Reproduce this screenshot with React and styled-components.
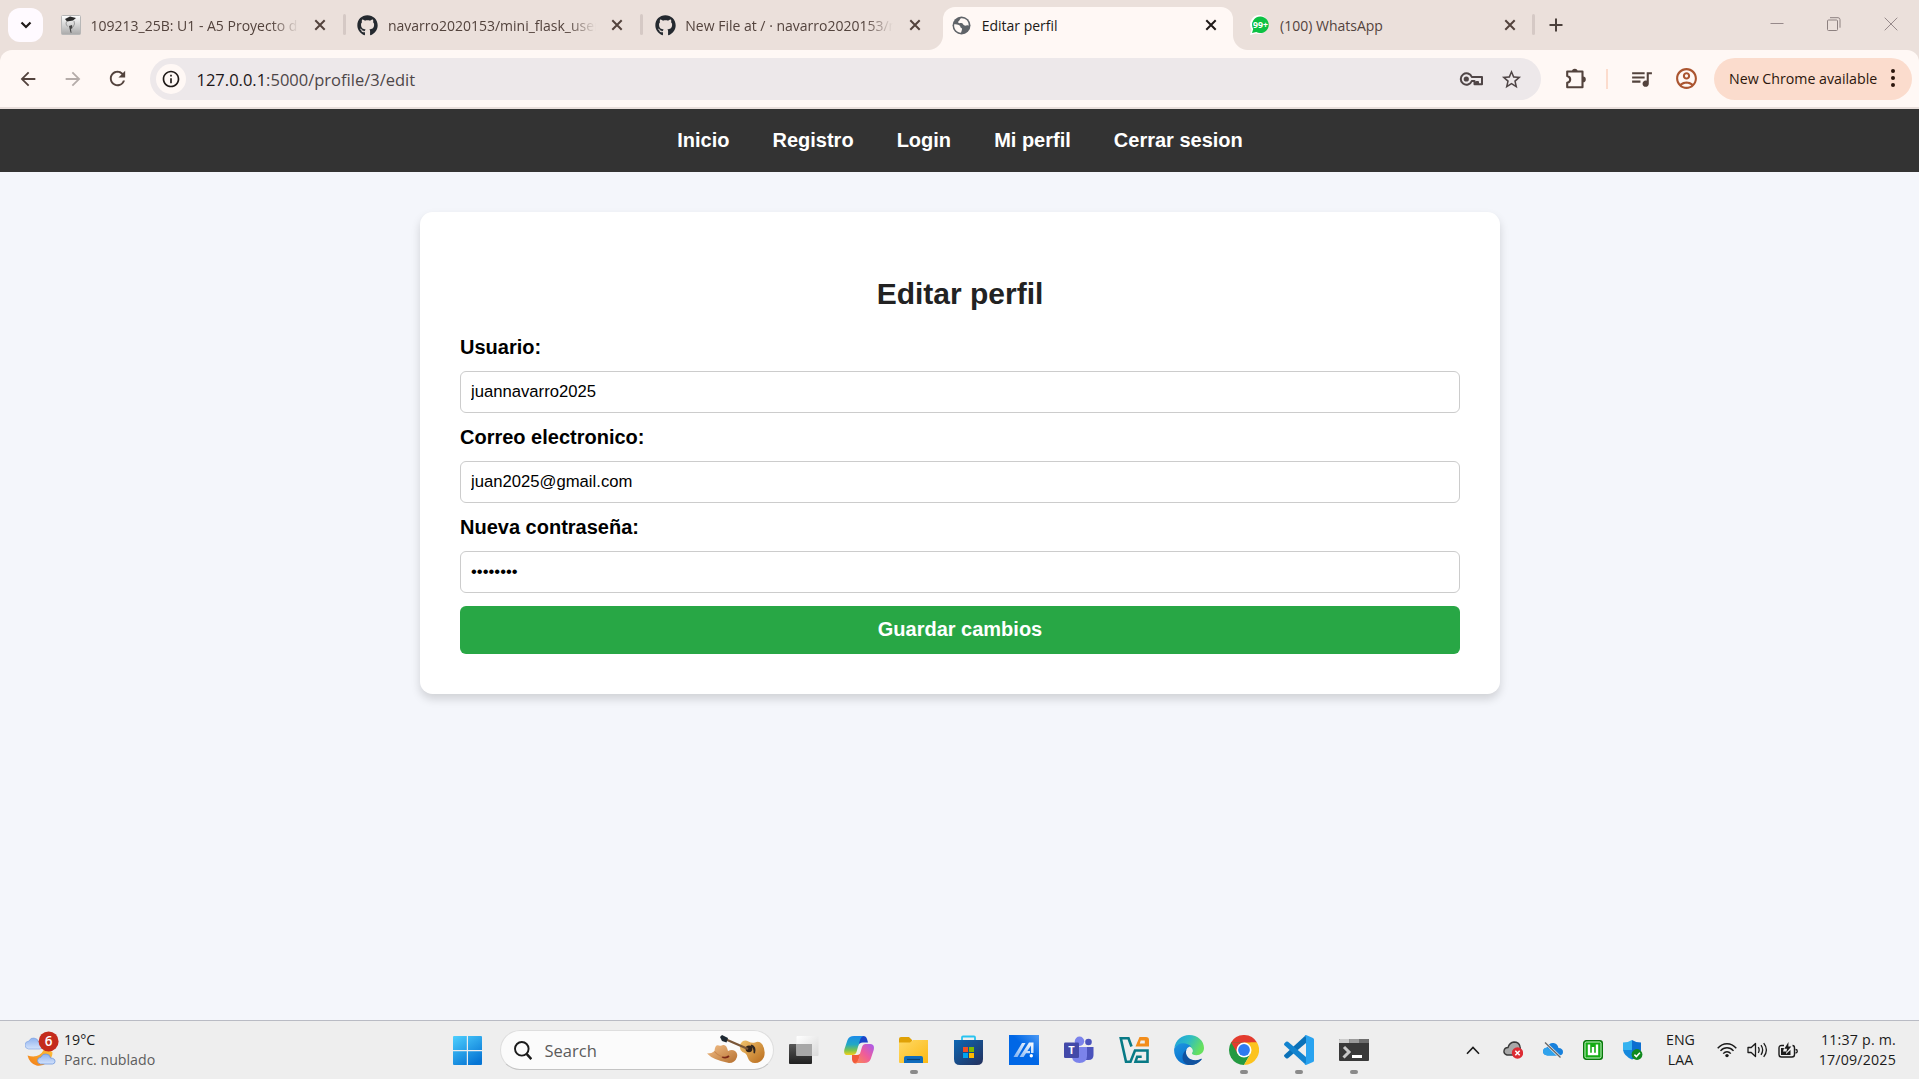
import React from "react";
import styled, { createGlobalStyle, css } from "styled-components";
import { FaGithub } from "react-icons/fa";
import {
  MdArrowBack,
  MdArrowForward,
  MdRefresh,
  MdInfoOutline,
  MdStarOutline,
  MdQueueMusic,
  MdOutlineAccountCircle,
} from "react-icons/md";

const UI_FONT = '"Open Sans", "Noto Sans", sans-serif';

const GlobalStyle = createGlobalStyle`
  * { box-sizing: border-box; }
  html, body { margin: 0; padding: 0; overflow: hidden; }
  body { font-family: "Liberation Sans", Arial, sans-serif; }
  svg { display: block; flex: none; }
`;

const Screen = styled.div`
  display: flex;
  flex-direction: column;
  width: 1919px;
  height: 1079px;
  background: #f4f6fb;
`;

/* ---------- Browser chrome ---------- */

const TabStrip = styled.div`
  display: flex;
  height: 50px;
  padding-left: 8px;
  background: #ebe0db;
  font-family: ${UI_FONT};
`;

const TabSearch = styled.div`
  display: flex;
  align-items: center;
  justify-content: center;
  width: 35px;
  height: 34px;
  margin: 8px 4px 0 0;
  border-radius: 12px;
  background: #fffaff;
`;

const Tab = styled.div`
  position: relative;
  display: flex;
  align-items: center;
  width: 297.4px;
  height: 50px;
  padding: 0 0 0 13.5px;
  color: ${(p) => (p.$active ? "#201a18" : "#53433d")};
  ${(p) =>
    p.$active &&
    css`
      width: 289.4px;
      height: 43px;
      margin: 7px 4px 0;
      padding: 0 0 7px 8.500px;
      border-radius: 12px 12px 0 0;
      background: #fff8f5;
      &::before,
      &::after {
        content: "";
        position: absolute;
        bottom: 0;
        width: 15px;
        height: 15px;
      }
      &::before {
        left: -15px;
        background: radial-gradient(circle at 0 0, transparent 14.5px, #fff8f5 15.5px);
      }
      &::after {
        right: -15px;
        background: radial-gradient(circle at 100% 0, transparent 14.5px, #fff8f5 15.5px);
      }
    `}
`;

const Favicon = styled.span`
  display: flex;
  align-items: center;
  justify-content: center;
  width: 20px;
  height: 20px;
`;

const TabTitle = styled.span`
  width: 209px;
  margin: 1px 0 0 10px;
  overflow: hidden;
  white-space: nowrap;
  font-size: 14px;
  line-height: 20px;
  ${(p) =>
    p.$fade && css`mask-image: linear-gradient(90deg, #000 180px, transparent 208px);`}
`;

const TabClose = styled.span`
  display: flex;
  justify-content: center;
  width: 20px;
  margin-left: 10.5px;
`;

const TabSeparator = styled.span`
  width: 3px;
  height: 21px;
  margin: 0 -1.5px 2px auto;
  border-radius: 2px;
  background: #d5c9c5;
`;

const NewTab = styled.span`
  display: flex;
  align-items: center;
  margin-left: 15px;
`;

const WindowButtons = styled.div`
  display: flex;
  align-items: center;
  gap: 43px;
  height: 48px;
  margin: 0 21px 0 auto;
`;

const ToolbarBack = styled.div`
  background: #ebe0db;
  font-family: ${UI_FONT};
`;

const Toolbar = styled.div`
  display: flex;
  align-items: center;
  height: 57px;
  padding: 0 7px 0 5px;
  border-radius: 12px 12px 0 0;
  background: #fff8f5;
`;

const ToolButton = styled.span`
  display: flex;
  align-items: center;
  justify-content: center;
  width: ${(p) => p.$w || 45}px;
  color: ${(p) => p.$color || "#53433d"};
`;

const Omnibox = styled.div`
  display: flex;
  align-items: center;
  width: 1391px;
  height: 42px;
  margin: 1px 0 0 10px;
  padding: 0 10px 0 6px;
  border-radius: 21px;
  background: #ede8ea;
`;

const SiteInfo = styled.span`
  display: flex;
  align-items: center;
  justify-content: center;
  width: 30px;
  height: 30px;
  border-radius: 50%;
  background: #fff8f5;
  color: #201a18;
`;

const Url = styled.span`
  margin: 1px auto 0 10.5px;
  color: #4d4648;
  font-size: 16.5px;
  line-height: 24px;
  b {
    color: #1c1618;
    font-weight: 400;
  }
`;

const ToolDivider = styled.span`
  width: 2px;
  height: 20px;
  margin: 0 9px 0 -4px;
  background: #fcdccd;
`;

const UpdatePill = styled.div`
  display: flex;
  align-items: center;
  justify-content: space-between;
  width: 198px;
  height: 42px;
  margin-left: auto;
  padding: 0 17px 1px 15px;
  border-radius: 21px;
  background: #fbdccd;
  color: #2b160c;
  font-size: 14.2px;
  white-space: nowrap;
`;

const ChromeEdge = styled.div`
  height: 2px;
  background: #e9dfdc;
`;

/* ---------- Page ---------- */

const Nav = styled.nav`
  display: flex;
  justify-content: center;
  gap: 43.06px;
  height: 63px;
  padding: 20px 0 0 1px;
  background: #333;
`;

const NavLink = styled.a`
  color: #fff;
  font-size: 20px;
  font-weight: 700;
  line-height: 23px;
`;

const Page = styled.main`
  flex: 1;
  padding: 40px 0 0 1px;
`;

const Card = styled.form`
  display: flex;
  flex-direction: column;
  width: 1080px;
  height: 482px;
  margin: 0 auto;
  padding: 65px 40px 40px;
  border-radius: 12.5px;
  background: #fff;
  box-shadow: 0 5px 10px rgba(0, 0, 0, 0.15);
`;

const Title = styled.h2`
  margin: 0 0 12px;
  color: #222;
  font-size: 30px;
  line-height: 34px;
  text-align: center;
`;

const Label = styled.label`
  margin: 13px 0 12px;
  color: #000;
  font-size: 20px;
  font-weight: 700;
  line-height: 23px;
`;

const Input = styled.input`
  width: 100%;
  height: 42px;
  padding: 0 10px;
  border: 1px solid #ccc;
  border-radius: 6px;
  outline: none;
  background: #fff;
  color: #000;
  font: 16.667px "Liberation Sans", Arial, sans-serif;
`;

const Submit = styled.button`
  width: 100%;
  height: 48px;
  margin-top: 13px;
  padding: 0 0 2px;
  border: 0;
  border-radius: 6px;
  background: #28a745;
  color: #fff;
  font: 700 20px "Liberation Sans", Arial, sans-serif;
`;

/* ---------- Taskbar ---------- */

const Taskbar = styled.footer`
  display: flex;
  align-items: center;
  height: 59px;
  padding: 0 23px 0 25px;
  border-top: 1px solid #b9bbc4;
  background: #eee;
  color: #1b1b1b;
  font-family: ${UI_FONT};
  font-size: 14.2px;
`;

const Weather = styled.div`
  display: flex;
  align-items: center;
  gap: 5px;
  width: 428px;
`;

const Lines = styled.div`
  display: flex;
  flex-direction: column;
  line-height: 20px;
  text-align: ${(p) => p.$align || "left"};
  white-space: nowrap;
  letter-spacing: ${(p) => p.$spacing || 0}px;
`;

const Muted = styled.span`
  color: #5d5d5d;
`;

const SearchBox = styled.div`
  display: flex;
  align-items: center;
  width: 274px;
  height: 40px;
  margin: 0 15px 0 17px;
  padding: 0 7px 0 13px;
  border: 1px solid #dedede;
  border-bottom-color: #c4c4c4;
  border-radius: 20px;
  background: #fbfbfb;
  color: #5c5c5c;
  font-size: 16.5px;
`;

const SearchText = styled.span`
  margin: 0 auto 0 12.5px;
`;

const Apps = styled.div`
  display: flex;
  gap: 25px;
`;

const App30 = styled.span`
  position: relative;
  width: 30px;
  height: 30px;
  ${(p) =>
    p.$running &&
    css`
      &::after {
        content: "";
        position: absolute;
        left: 11px;
        top: 35px;
        width: 8px;
        height: 4px;
        border-radius: 2px;
        background: #8a8a8a;
      }
    `}
`;

const Tray = styled.div`
  display: flex;
  align-items: center;
  margin-left: auto;
`;

const TrayIcon = styled.span`
  display: flex;
  justify-content: center;
  width: ${(p) => p.$w}px;
`;

const Clock = styled.div`
  width: 91px;
`;

/* ---------- Drawings ---------- */

const Cross = ({ color = "#53433d" }) => (
  <svg width="12" height="12" viewBox="0 0 12 12" stroke={color} strokeWidth="2">
    <path d="M1.3 1.3 10.7 10.7M10.7 1.3 1.3 10.7" />
  </svg>
);

const CourseIcon = () => (
  <svg width="20" height="20" viewBox="0 0 20 20">
    <defs>
      <linearGradient id="course" x1="0" y1="0" x2="0" y2="1">
        <stop offset="0" stopColor="#fff" />
        <stop offset="1" stopColor="#a9a9a9" />
      </linearGradient>
    </defs>
    <rect x=".5" y=".5" width="19" height="19" rx="1" fill="url(#course)" stroke="#b7b7b7" />
    <path d="M4 4 9 1.500l6 1.500-3 2.500-6 1z" fill="#2a2a2a" />
    <path d="M5.500 6.500Q4 9 6.500 11.500M13 6q1.500 3-1 6" fill="none" stroke="#9a9a9a" />
    <path d="m8 11 3-1 .5 3-1.500 1 .5 4-1-.5z" fill="#444" />
  </svg>
);

const Globe = () => (
  <svg width="19" height="19" viewBox="0 0 19 19">
    <circle cx="9.500" cy="9.500" r="9" fill="#5f6368" />
    <path
      d="M2.200 8.300c2 .2 3.500 0 5 1 1.800 1.100.5 2.200 2.200 2.600 1.200.4.500 2.200-.4 4.800C5 16.500 1.500 13 2.200 8.300zM8.800 2.200C7.200 4 7.700 4.800 6.200 5.500c-.6 2 1.600 1.700 2.800 1.500 2.200-.2 2 2.200 3.600 2.600 1.600.2 2.200-.8 4 .2C17.300 4.700 13 1.600 8.800 2.200z"
      fill="#fff8f5"
    />
  </svg>
);

const WhatsAppText = styled.text`
  font: 700 9px "Open Sans", "Noto Sans", sans-serif;
  fill: #fff;
`;

const WhatsApp = () => (
  <svg width="20" height="20" viewBox="0 0 20 20">
    <path d="M10.500 0A9.500 9.500 0 1 1 6 18.600L0 20l1.600-5.500A9.500 9.500 0 0 1 10.500 0z" fill="#fff" />
    <path d="M10.500 1.500a8.300 8.300 0 1 1-4.200 15.500L2 18l1.200-4.100A8.300 8.300 0 0 1 10.500 1.500z" fill="#0cc143" />
    <WhatsAppText x="3" y="13" textLength="15" lengthAdjust="spacingAndGlyphs">
      99+
    </WhatsAppText>
  </svg>
);

const KeyIcon = () => (
  <svg width="24" height="18" viewBox="0 0 24 18" fill="none" stroke="#4f4546" strokeWidth="2">
    <path d="M12.800 7A5.700 5.700 0 1 0 12.800 11H15.500v3.300h2V12h1.500v2.300H23V7z" strokeLinejoin="round" />
    <circle cx="7.300" cy="9" r="2.600" fill="#4f4546" stroke="none" />
  </svg>
);

const PuzzleIcon = () => (
  <svg width="22" height="22" viewBox="0 0 22 22">
    <path
      d="M2.200 3.500h15.300v15.800H2.200v-4.500q3-.8 3-3.400t-3-3.400z"
      fill="none"
      stroke="#53433d"
      strokeWidth="2.100"
      strokeLinejoin="round"
    />
    <path d="M7 3.500a2.800 2.800 0 0 1 5.600 0zM18 8.600a2.800 2.800 0 0 1 0 5.600z" fill="#53433d" />
  </svg>
);

const BadgeText = styled.text`
  font: 600 13.5px "Open Sans", "Noto Sans", sans-serif;
  fill: #fff;
`;

const WeatherIcon = () => (
  <svg width="34" height="38" viewBox="0 0 34 38">
    <defs>
      <linearGradient id="cloud" x1="0" y1="0" x2="0" y2="1">
        <stop offset="0" stopColor="#8fb2ee" />
        <stop offset="1" stopColor="#d3e2fb" />
      </linearGradient>
      <linearGradient id="moon" x1="1" y1="0" x2="0" y2="1">
        <stop offset="0" stopColor="#ffc23a" />
        <stop offset="1" stopColor="#f17a16" />
      </linearGradient>
    </defs>
    <path d="M3.500 18q-3.500-.5-3.500-4t4-4Q5.500 6.500 9 7q4 .5 4.500 4 4 .5 4 4 0 2.500-2.500 3z" fill="url(#cloud)" stroke="#7ba0e0" strokeWidth=".6" />
    <path d="M2.500 24.500Q14 28 19 18.500q7 .5 8.500 3 0 5-5 10-5 4-11 3-7-2-9-10z" fill="url(#moon)" />
    <path d="M15.500 33q-3-.5-3-3.500t3.500-3.300q1.500-3.700 5-3.200 4 .3 4.500 4 4.500.2 4.500 3.500 0 2.200-2.500 2.500z" fill="url(#cloud)" stroke="#6f97dd" strokeWidth=".8" />
    <circle cx="23.600" cy="10.400" r="10" fill="#c42b1c" />
    <BadgeText x="23.600" y="15.400" textAnchor="middle">
      6
    </BadgeText>
  </svg>
);

const WindowsLogo = () => (
  <svg width="30" height="30" viewBox="0 0 30 30">
    <defs>
      <linearGradient id="win" gradientUnits="userSpaceOnUse" x1="2" y1="0" x2="20" y2="29">
        <stop offset="0" stopColor="#4ccdfd" />
        <stop offset="1" stopColor="#0675d4" />
      </linearGradient>
    </defs>
    <g transform="translate(0 1)">
      <path d="M0 1q0-1 1-1h12.800v14H0zM15 0h13q1 0 1 1v13H15zM0 15.200h13.800v13.800H1q-1 0-1-1zM15 15.200h14V28q0 1-1 1H15z" fill="url(#win)" />
    </g>
  </svg>
);

const Guitar = () => (
  <svg width="60" height="30" viewBox="0 0 60 30">
    <defs>
      <linearGradient id="guitar" x1="0" y1="0" x2="1" y2="1">
        <stop offset="0" stopColor="#f1c36c" />
        <stop offset="1" stopColor="#b86b1d" />
      </linearGradient>
      <linearGradient id="hat" x1="0" y1="0" x2="1" y2="1">
        <stop offset="0" stopColor="#f4c08a" />
        <stop offset="1" stopColor="#b5702f" />
      </linearGradient>
    </defs>
    <path d="M35 8q3-4 7.500-1.500Q46 8.500 49 7.500q4-2 7 1.500 4 6 2 13-3 6-9 6-5.500 0-7.500-6-1-4-5-5-4.500-3.500-1.500-9z" fill="url(#guitar)" />
    <circle cx="43" cy="13.800" r="3.400" fill="#30231a" />
    <path d="m45.500 9.500q5.500 2 3.500 9l-1.500-.5q.5-5-3-7z" fill="#2d2623" />
    <path d="m19 4 23 10" stroke="#795638" strokeWidth="2.400" />
    <path d="m14 2 2-2 6 3-1.500 4.500L16 6z" fill="#1d2832" />
    <path d="M1 18.500q5 0 7.500-2.500Q9 9 13 10.500q2 .8 4-.5 3.500-1 5 6 4-2 7 0 3 2.500 2 6-2 6-8 6Q7 25 1 18.500z" fill="url(#hat)" />
    <path d="M16 22q4.500 1.500 7-1" fill="none" stroke="#7b2817" strokeWidth="1.800" />
    <path d="M8.500 16.500q3 4 8 5.500" fill="none" stroke="#c98850" strokeWidth="1.200" />
  </svg>
);

const TaskView = () => (
  <svg width="30" height="30" viewBox="0 0 30 30">
    <defs>
      <linearGradient id="tv" x1="0" y1="0" x2="0" y2="1">
        <stop offset="0" stopColor="#575757" />
        <stop offset="1" stopColor="#202020" />
      </linearGradient>
      <linearGradient id="tvw" x1="0" y1="0" x2="1" y2="1">
        <stop offset="0" stopColor="#fff" />
        <stop offset="1" stopColor="#d9d9d9" />
      </linearGradient>
    </defs>
    <rect x="0" y="9" width="23" height="20" rx="1" fill="url(#tv)" />
    <rect x="7.500" y="1" width="22" height="20" rx="1" fill="url(#tvw)" />
    <path d="M7.500 9H23v12H7.500z" fill="#a8a8a8" />
  </svg>
);

const Copilot = () => (
  <svg width="30" height="30" viewBox="0 0 30 30">
    <defs>
      <linearGradient id="cp1" x1="0" y1="0" x2="0" y2="1">
        <stop offset="0" stopColor="#1a8bea" />
        <stop offset=".45" stopColor="#22a8c4" />
        <stop offset=".75" stopColor="#7cc34c" />
        <stop offset="1" stopColor="#f5cf19" />
      </linearGradient>
      <linearGradient id="cp2" x1="1" y1="0" x2="0" y2="1">
        <stop offset="0" stopColor="#a55bf0" />
        <stop offset=".5" stopColor="#ef5c9b" />
        <stop offset="1" stopColor="#fb8b4e" />
      </linearGradient>
    </defs>
    <path d="M16 1h3.500Q22 1 23 4l1 3.500h-5Q15 7.500 14 11z" fill="#1a45c9" />
    <path d="M10 1h10q-3 .5-4 4l-3.500 12q-1 3-4 3H3.500Q-1 20 .5 14L3.500 5Q5 1 10 1z" fill="url(#cp1)" />
    <path d="M8 20h5q3 0 4-3l-3 10q-1 1.500-3 1.500-2.500-.5-3-4z" fill="#f25a3a" />
    <path d="M21.500 9h4.500q5 0 3.700 6l-3 9q-1.500 4-6.200 4H11q2.500-.5 3.500-4L18 12q1-3 3.500-3z" fill="url(#cp2)" />
  </svg>
);

const Folder = () => (
  <svg width="30" height="30" viewBox="0 0 30 30">
    <defs>
      <linearGradient id="fold" x1="0" y1="0" x2="1" y2="1">
        <stop offset="0" stopColor="#ffd965" />
        <stop offset="1" stopColor="#fbb914" />
      </linearGradient>
    </defs>
    <path d="M0 4q0-2 2-2h8l3 3v7H0z" fill="#e0a106" />
    <path d="M0 7.500h11L14 5h15v23H1q-1 0-1-1z" fill="url(#fold)" />
    <path d="M5 28v-5q0-2 2-2h15q2 0 2 2v5z" fill="#0f6cbd" />
    <path d="M8 24.500h13" stroke="#0a4173" strokeWidth="1.200" />
  </svg>
);

const Store = () => (
  <svg width="30" height="30" viewBox="0 0 30 30">
    <defs>
      <linearGradient id="store" x1="0" y1="0" x2="1" y2="1">
        <stop offset="0" stopColor="#0d67b4" />
        <stop offset="1" stopColor="#24305c" />
      </linearGradient>
    </defs>
    <path d="M8 6V2.500q0-1 1-1h11q1 0 1 1V6" fill="none" stroke="#27c3f0" strokeWidth="1.800" />
    <path d="M0 5h29v19q0 6-6 6H6q-6 0-6-6z" fill="url(#store)" />
    <path d="M9 12h5v5H9z" fill="#f25022" />
    <path d="M15 12h5v5h-5z" fill="#7fba00" />
    <path d="M9 18h5v5H9z" fill="#00a4ef" />
    <path d="M15 18h5v5h-5z" fill="#ffb900" />
  </svg>
);

const MyAsus = () => (
  <svg width="30" height="30" viewBox="0 0 30 30">
    <defs>
      <linearGradient id="asus" x1="0" y1="1" x2="1" y2="0">
        <stop offset=".55" stopColor="#0067e6" />
        <stop offset="1" stopColor="#4d9af4" />
      </linearGradient>
      <linearGradient id="slash" x1="0" y1="1" x2="1" y2="0">
        <stop offset="0" stopColor="#7db1f3" />
        <stop offset="1" stopColor="#fff" />
      </linearGradient>
    </defs>
    <path d="M0 0h30v30H0z" fill="url(#asus)" />
    <path d="M4.500 22H8.500L16.500 8H13zM10.500 22H14.500L17 18.300h4V16h-2.600L22 10.500V18h2.500V7.500H20z" fill="url(#slash)" />
    <circle cx="22.300" cy="20.700" r="1.700" fill="#fff" />
  </svg>
);

const TeamsText = styled.text`
  font: 700 11px "Open Sans", "Noto Sans", sans-serif;
  fill: #fff;
`;

const Teams = () => (
  <svg width="30" height="30" viewBox="0 0 30 30">
    <circle cx="24.500" cy="7" r="3.300" fill="#4b53bc" />
    <path d="M20 12h9.500v8q0 5-5 5H20z" fill="#4b53bc" />
    <circle cx="15.500" cy="6.300" r="4.700" fill="#7b83eb" />
    <path d="M8 12h15v9q0 7-7.500 7T8 21z" fill="#7b83eb" />
    <rect x="0" y="7.500" width="15" height="15.500" rx="1.300" fill="#4349a9" />
    <TeamsText x="7.500" y="19.200" textAnchor="middle">
      T
    </TeamsText>
  </svg>
);

const VirtualBox = () => (
  <svg width="30" height="30" viewBox="0 0 30 30">
    <path d="M12.500 11.500 9.500 3.300H1.800L7 26.700h4.500L16 15.500h12.500v11.200H16.500l1.700-5h4.500" fill="none" stroke="#087a86" strokeWidth="2.600" />
    <path d="M20.500 2H27q3 0 3 3v6.500H16.500zM21.700 5.500 20.800 8.500h5V5.500z" fill="#f28d1b" fillRule="evenodd" />
  </svg>
);

const Edge = () => (
  <svg width="30" height="30" viewBox="0 0 30 30">
    <defs>
      <linearGradient id="edge1" x1="0" y1="0" x2="1" y2=".4">
        <stop offset="0" stopColor="#1d9ede" />
        <stop offset=".5" stopColor="#2dbbc6" />
        <stop offset="1" stopColor="#67e05e" />
      </linearGradient>
      <linearGradient id="edge2" x1="0" y1="0" x2=".6" y2="1">
        <stop offset="0" stopColor="#1e96e0" />
        <stop offset="1" stopColor="#0669c9" />
      </linearGradient>
    </defs>
    <path d="M.3 13C1.500 5 8 0 15 0c9 0 15 6 15 13 0 4.500-3.500 7.200-7.500 7.200-3.200 0-5-1.200-4.500-2.200 1.500-1.500 1-4-1-5.500C13 9 6 7.500.3 13z" fill="url(#edge1)" />
    <path d="M.2 13.500C4 6.500 13 7 17.500 11.500c-3-.5-5.500 2-5.500 5.500 0 6 6 9.500 11 8.500 2-.3 3.500-1 4.500-1.500C25 28 20 30 15 30 6 30-.8 22.500.2 13.500z" fill="url(#edge2)" />
    <path d="M12.500 14.500c-2.500 6 2.500 11 9 10.800 2.500 0 4.500-1 5.500-1.500 1-.3 1 .5.5 1C24 29 19 30.500 14.500 30 8 28 6 20 12.500 14.500z" fill="#10529f" />
  </svg>
);

const Chrome = () => (
  <svg width="30" height="30" viewBox="0 0 30 30">
    <path d="M15 15 2.010 7.500A15 15 0 0 1 28 7.500z" fill="#e33b2e" />
    <path d="M2.010 7.500A15 15 0 0 0 15 30l6.500-11.200L15 15z" fill="#249a41" />
    <path d="M28 7.500A15 15 0 0 1 15 30l6.500-11.200V7.500z" fill="#fcc31e" />
    <path d="M2.010 7.500 8.500 18.700 15 22.500l6.500-3.700L15 15V7.500z" fill="#249a41" />
    <path d="M2.010 7.500 8.500 18.700 15 7.500z" fill="#e33b2e" />
    <path d="M15 7.500h13L21.500 18.800z" fill="#fcc31e" />
    <path d="M2.010 7.500 8.500 18.700l-3 2z" fill="#249a41" />
    <circle cx="15" cy="15" r="7.500" fill="#fff" />
    <circle cx="15" cy="15" r="5.900" fill="#2f7bf0" />
  </svg>
);

const VSCode = () => (
  <svg width="30" height="30" viewBox="0 0 30 30">
    <path d="M22 0v8L4 23.200q-1 .8-2 0l-1.500-1.500q-1-1 0-2z" fill="#0a71b8" />
    <path d="M22 30v-8L4 6.800q-1-.8-2 0L.5 8.300q-1 1 0 2z" fill="#1283cf" />
    <path d="M22 0 29 3q1 .5 1 1.500v21q0 1-1 1.500l-7 3q-.8 0-1.500-1 1.500 0 1.500-2V3q0-2-1.500-2z" fill="#29a3f0" />
  </svg>
);

const Terminal = () => (
  <svg width="30" height="30" viewBox="0 0 30 30">
    <path d="M0 9V5q0-1 1-1h28q1 0 1 1v20q0 1-1 1H1q-1 0-1-1z" fill="#393939" />
    <path d="M1 4h9.500v4H0V5q0-1 1-1z" fill="#ccc" />
    <path d="M10.500 4H20v4h-9.500z" fill="#9a9a9a" />
    <path d="M20 4h9q1 0 1 1v3H20z" fill="#6d6d6d" />
    <path d="m5 12 5 5-5.500 5.500" fill="none" stroke="#c9c9c9" strokeWidth="3" />
    <path d="M13 20h10v3H13z" fill="#fff" />
  </svg>
);

const CloudError = () => (
  <svg width="20" height="18" viewBox="0 0 20 18">
    <path d="M4 14q-3.500-1-3-4.200T5 6.500Q6.500 1.500 11 1q5 0 6 4.500 1 4-1 8.500z" fill="#a8a8a8" stroke="#3a3a3a" strokeWidth="1.400" />
    <circle cx="14.500" cy="12" r="5.700" fill="#dd2b33" />
    <path d="m12.300 9.800 4.400 4.400m0-4.400-4.400 4.400" stroke="#fff" strokeWidth="1.500" />
  </svg>
);

const OneDrive = () => (
  <svg width="20" height="18" viewBox="0 0 20 18">
    <path d="M4.500 14.500Q0 14 0 10.500t4-4Q6 1.500 10.500 2q4 .3 5 5 4.500.3 4.500 4 0 3.300-4 3.500z" fill="#1780dc" />
    <path d="M4.500 14.500Q0 14 0 10.500t4-4l13 8z" fill="#30a3ec" />
    <path d="m2 1.500 15.500 15" stroke="#eee" strokeWidth="2.600" />
    <path d="m2 1.500 15.500 15" stroke="#666" strokeWidth="1.300" />
  </svg>
);

const GreenU = () => (
  <svg width="20" height="20" viewBox="0 0 20 20">
    <rect x=".7" y=".7" width="18.600" height="18.600" rx="2.500" fill="#13ac13" stroke="#08780b" strokeWidth="1.400" />
    <rect x="2" y="2" width="16" height="16" rx="1.500" fill="none" stroke="#d9f5d9" strokeWidth=".9" />
    <path d="M6 4.500V14H14V4.500M10 7v7" fill="none" stroke="#fff" strokeWidth="2.400" />
  </svg>
);

const Shield = () => (
  <svg width="20" height="20" viewBox="0 0 20 20">
    <path d="M9 0q4 2.500 9 2.500V10q0 6-9 9.500z" fill="#0d6fd0" />
    <path d="M9 0Q5 2.500 0 2.500V10h9z" fill="#35b3f0" />
    <path d="M0 10h9v9.500Q1 16 0 10z" fill="#1689dd" />
    <circle cx="14" cy="14.500" r="5.400" fill="#118a1e" />
    <path d="m11.400 14.600 2 2 3.500-3.800" fill="none" stroke="#fff" strokeWidth="1.500" />
  </svg>
);

const Wifi = () => (
  <svg width="20" height="16" viewBox="0 0 20 16" fill="none" stroke="#1b1b1b" strokeWidth="1.400">
    <path d="M.7 6.200q4-4.500 9.300-4.500t9.300 4.500M3.500 8.900Q6.300 5.800 10 5.800t6.500 3.100M6.200 11.600Q7.800 9.700 10 9.700t3.800 1.900" />
    <circle cx="10" cy="13.600" r="1.700" fill="#1b1b1b" stroke="none" />
  </svg>
);

const Volume = () => (
  <svg width="21" height="16" viewBox="0 0 21 16" fill="none" stroke="#1b1b1b" strokeWidth="1.300" strokeLinejoin="round">
    <path d="M1 5.500h3.200L8.500 1.500v13l-4.300-4H1zM11.300 5.200q1.700 2.800 0 5.600M14 3.200q3.300 4.800 0 9.600M16.700 1.200q5.400 6.800 0 13.600" />
  </svg>
);

const Battery = () => (
  <svg width="20" height="17" viewBox="0 0 20 17">
    <path d="M6 3.500H3.500Q1 3.500 1 6v6.500Q1 15 3.500 15H14q2.500 0 2.500-2.500V6q0-2.500-2-2.500" fill="none" stroke="#1b1b1b" strokeWidth="1.400" />
    <path d="M17.500 7.500q1.800 0 1.800 1.700T17.500 11" fill="none" stroke="#1b1b1b" strokeWidth="1.300" />
    <path d="M3 6h3l-1 3.500h3V12l4.500-4v5H3zM10.500 0 6.300 6.700h2.800L8 11l5.300-6.600h-3z" fill="#1b1b1b" />
  </svg>
);

/* ---------- Composition ---------- */

const tabs = [
  { icon: <CourseIcon />, title: "109213_25B: U1 - A5 Proyecto d", fade: true, separator: true },
  { icon: <FaGithub size={21} color="#24292f" />, title: "navarro2020153/mini_flask_user", fade: true, separator: true },
  { icon: <FaGithub size={21} color="#24292f" />, title: "New File at / · navarro2020153/m", fade: true },
  { icon: <Globe />, title: "Editar perfil", active: true },
  { icon: <WhatsApp />, title: "(100) WhatsApp", separator: true },
];

const navLinks = ["Inicio", "Registro", "Login", "Mi perfil", "Cerrar sesion"];

const fields = [
  { id: "user", label: "Usuario:", type: "text", value: "juannavarro2025" },
  { id: "mail", label: "Correo electronico:", type: "text", value: "juan2025@gmail.com" },
  { id: "pass", label: "Nueva contraseña:", type: "password", value: "password" },
];

const apps = [
  { Icon: TaskView },
  { Icon: Copilot },
  { Icon: Folder, running: true },
  { Icon: Store },
  { Icon: MyAsus },
  { Icon: Teams },
  { Icon: VirtualBox },
  { Icon: Edge },
  { Icon: Chrome, running: true },
  { Icon: VSCode, running: true },
  { Icon: Terminal, running: true },
];

function BrowserChrome() {
  return (
    <header>
      <TabStrip>
        <TabSearch>
          <svg width="12" height="8" viewBox="0 0 12 8" fill="none" stroke="#201a18" strokeWidth="2.200">
            <path d="m1.500 1.500 4.500 4.500 4.500-4.500" />
          </svg>
        </TabSearch>
        {tabs.map((t) => (
          <Tab key={t.title} $active={t.active}>
            <Favicon>{t.icon}</Favicon>
            <TabTitle $fade={t.fade}>{t.title}</TabTitle>
            <TabClose>
              <Cross color={t.active ? "#201a18" : undefined} />
            </TabClose>
            {t.separator && <TabSeparator />}
          </Tab>
        ))}
        <NewTab>
          <svg width="14" height="14" viewBox="0 0 14 14" stroke="#4b403c" strokeWidth="2">
            <path d="M7 .5v13M.5 7h13" />
          </svg>
        </NewTab>
        <WindowButtons>
          <svg width="14" height="14" viewBox="0 0 14 14" stroke="#96898a">
            <path d="M.5 6.500h13" />
          </svg>
          <svg width="14" height="14" viewBox="0 0 14 14" fill="none" stroke="#8d8180">
            <rect x=".5" y="3" width="10" height="10.500" rx="1" />
            <path d="M3 .7h8q2 0 2 2v8" />
          </svg>
          <svg width="14" height="14" viewBox="0 0 14 14" stroke="#96898a">
            <path d="m.7.7 12.600 12.600M13.300.7.7 13.300" />
          </svg>
        </WindowButtons>
      </TabStrip>
      <ToolbarBack>
        <Toolbar>
          <ToolButton><MdArrowBack size={22} /></ToolButton>
          <ToolButton $color="#b5aca9"><MdArrowForward size={22} /></ToolButton>
          <ToolButton><MdRefresh size={23} /></ToolButton>
          <Omnibox>
            <SiteInfo><MdInfoOutline size={20} /></SiteInfo>
            <Url><b>127.0.0.1</b>:5000/profile/3/edit</Url>
            <ToolButton $w={40}><KeyIcon /></ToolButton>
            <ToolButton $w={40} $color="#4f4546"><MdStarOutline size={23} /></ToolButton>
          </Omnibox>
          <ToolButton $w={69}><PuzzleIcon /></ToolButton>
          <ToolDivider />
          <ToolButton $w={48}><MdQueueMusic size={25} /></ToolButton>
          <ToolButton $w={42} $color="#ab5530"><MdOutlineAccountCircle size={25} /></ToolButton>
          <UpdatePill>
            New Chrome available
            <svg width="4" height="18" viewBox="0 0 4 18" fill="#2b160c">
              <circle cx="2" cy="2" r="2" />
              <circle cx="2" cy="9" r="2" />
              <circle cx="2" cy="16" r="2" />
            </svg>
          </UpdatePill>
        </Toolbar>
      </ToolbarBack>
      <ChromeEdge />
    </header>
  );
}

function ProfilePage() {
  return (
    <>
      <Nav>
        {navLinks.map((l) => (
          <NavLink key={l}>{l}</NavLink>
        ))}
      </Nav>
      <Page>
        <Card>
          <Title>Editar perfil</Title>
          {fields.map((f) => (
            <React.Fragment key={f.id}>
              <Label htmlFor={f.id}>{f.label}</Label>
              <Input id={f.id} type={f.type} defaultValue={f.value} spellCheck={false} />
            </React.Fragment>
          ))}
          <Submit type="button">Guardar cambios</Submit>
        </Card>
      </Page>
    </>
  );
}

function WindowsTaskbar() {
  return (
    <Taskbar>
      <Weather>
        <WeatherIcon />
        <Lines>
          <span>19°C</span>
          <Muted>Parc. nublado</Muted>
        </Lines>
      </Weather>
      <WindowsLogo />
      <SearchBox>
        <svg width="18" height="19" viewBox="0 0 18 19" fill="none" stroke="#1b1b1b" strokeWidth="1.900">
          <circle cx="7.800" cy="7.800" r="6.800" />
          <path d="m12.600 12.900 4.700 5.200" strokeWidth="2.400" />
        </svg>
        <SearchText>Search</SearchText>
        <Guitar />
      </SearchBox>
      <Apps>
        {apps.map(({ Icon, running }, i) => (
          <App30 key={i} $running={running}>
            <Icon />
          </App30>
        ))}
      </Apps>
      <Tray>
        <TrayIcon $w={40}>
          <svg width="14" height="9" viewBox="0 0 14 9" fill="none" stroke="#1b1b1b" strokeWidth="1.600">
            <path d="m1 7.800 6-6.300 6 6.300" />
          </svg>
        </TrayIcon>
        <TrayIcon $w={40}><CloudError /></TrayIcon>
        <TrayIcon $w={40}><OneDrive /></TrayIcon>
        <TrayIcon $w={40}><GreenU /></TrayIcon>
        <TrayIcon $w={40}><Shield /></TrayIcon>
        <TrayIcon $w={55}>
          <Lines $align="center">
            <span>ENG</span>
            <span>LAA</span>
          </Lines>
        </TrayIcon>
        <TrayIcon $w={37}><Wifi /></TrayIcon>
        <TrayIcon $w={25}><Volume /></TrayIcon>
        <TrayIcon $w={35}><Battery /></TrayIcon>
        <Clock>
          <Lines $align="right" $spacing={0.2}>
            <span>11:37 p. m.</span>
            <span>17/09/2025</span>
          </Lines>
        </Clock>
      </Tray>
    </Taskbar>
  );
}

export default function App() {
  return (
    <Screen>
      <GlobalStyle />
      <BrowserChrome />
      <ProfilePage />
      <WindowsTaskbar />
    </Screen>
  );
}
